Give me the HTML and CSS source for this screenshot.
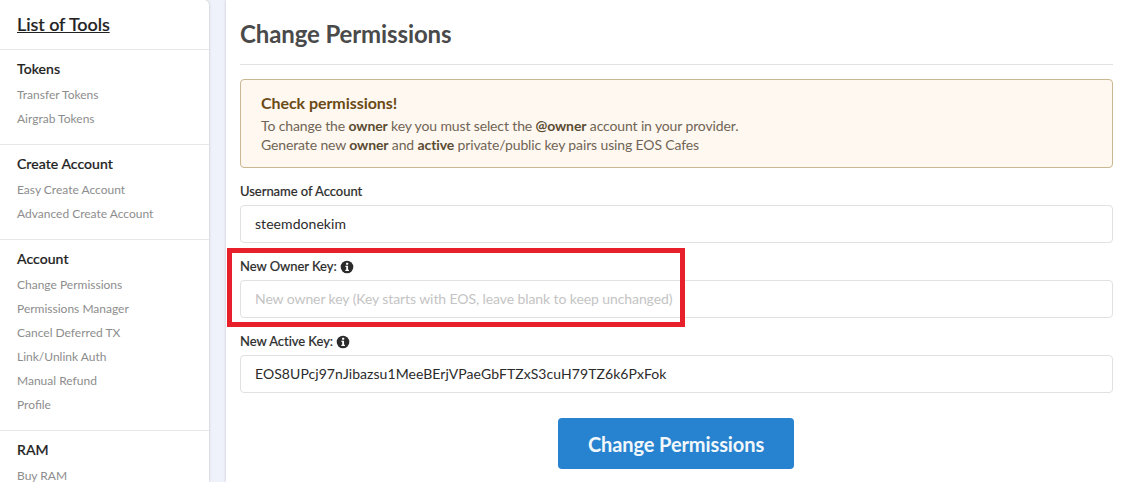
FILE: index.html
```html
<!DOCTYPE html>
<html lang="en">
<head>
<meta charset="utf-8">
<title>Change Permissions</title>
<link rel="stylesheet" href="styles.css">
</head>
<body>
<div class="page">
  <aside class="sidebar">
    <div class="side-title"><a href="#">List of Tools</a></div>
    <section class="side-group">
      <h4>Tokens</h4>
      <a href="#">Transfer Tokens</a>
      <a href="#">Airgrab Tokens</a>
    </section>
    <section class="side-group">
      <h4>Create Account</h4>
      <a href="#">Easy Create Account</a>
      <a href="#">Advanced Create Account</a>
    </section>
    <section class="side-group">
      <h4>Account</h4>
      <a href="#">Change Permissions</a>
      <a href="#">Permissions Manager</a>
      <a href="#">Cancel Deferred TX</a>
      <a href="#">Link/Unlink Auth</a>
      <a href="#">Manual Refund</a>
      <a href="#">Profile</a>
    </section>
    <section class="side-group">
      <h4>RAM</h4>
      <a href="#">Buy RAM</a>
    </section>
  </aside>
  <main class="main">
    <h1>Change Permissions</h1>
    <div class="notice">
      <h3>Check permissions!</h3>
      <p>To change the <b>owner</b> key you must select the <b>@owner</b> account in your provider.</p>
      <p>Generate new <b>owner</b> and <b>active</b> private/public key pairs using EOS Cafes</p>
    </div>
    <div class="field">
      <label for="user">Username of Account</label>
      <input id="user" type="text" value="steemdonekim">
    </div>
    <div class="field">
      <label for="owner">New Owner Key:
        <svg class="info" viewBox="0 0 16 16" aria-hidden="true"><circle cx="8" cy="8" r="7.2" fill="#2b2b2b"/><rect x="6.9" y="3.2" width="2.4" height="2.3" rx=".4" fill="#fff"/><path d="M6.2 6.7h3v4.4h1v1.4H6.1v-1.4h1V8.1h-.9z" fill="#fff"/></svg>
      </label>
      <input id="owner" type="text" placeholder="New owner key (Key starts with EOS, leave blank to keep unchanged)">
    </div>
    <div class="field">
      <label for="active">New Active Key:
        <svg class="info" viewBox="0 0 16 16" aria-hidden="true"><circle cx="8" cy="8" r="7.2" fill="#2b2b2b"/><rect x="6.9" y="3.2" width="2.4" height="2.3" rx=".4" fill="#fff"/><path d="M6.2 6.7h3v4.4h1v1.4H6.1v-1.4h1V8.1h-.9z" fill="#fff"/></svg>
      </label>
      <input id="active" type="text" value="EOS8UPcj97nJibazsu1MeeBErjVPaeGbFTZxS3cuH79TZ6k6PxFok">
    </div>
    <div class="actions"><button type="button">Change Permissions</button></div>
    <div class="highlight"></div>
  </main>
</div>
</body>
</html>
```
FILE: styles.css
```css
* { box-sizing: border-box; }
html, body { margin: 0; height: 100%; overflow: hidden; }
body { background: #eff1fb; font-family: Lato, "Liberation Sans", sans-serif; color: #222; }
.page { display: flex; gap: 17px; width: 1126px; height: 482px; overflow: hidden; }
.sidebar {
  flex: 0 0 209px; height: 482px; background: #fff; overflow: hidden;
  border-radius: 0 5px 0 0; box-shadow: 0 0 3px rgba(0,0,0,.22);
}
.side-title { height: 50px; padding: 13px 17px 0; font-size: 18px; line-height: 22px; font-weight: 500; letter-spacing: -.08px; border-bottom: 1px solid #e8e8e8; -webkit-text-stroke: .2px #222; }
.side-title a { color: #222; text-decoration: underline; }
.side-group { height: 95px; padding: 9px 17px 0; border-bottom: 1px solid #e8e8e8; }
.side-group:nth-of-type(3) { height: 191px; }
.side-group:last-child { border: 0; }
.side-group h4 { margin: 0 0 5px; font-size: 14px; line-height: 19px; font-weight: 500; letter-spacing: .06px; color: #222; -webkit-text-stroke: .2px #222; }
.side-group a { display: block; height: 24px; font-size: 12px; line-height: 24px; color: #8d8d8d; text-decoration: none; }
.main { position: relative; flex: 1; height: 482px; padding: 0 13px 0 14px; background: #fff; box-shadow: 0 0 3px rgba(0,0,0,.18); overflow: hidden; }
h1 { margin: 0 0 14px; height: 65px; padding-top: 18px; font-size: 24px; line-height: 32px; font-weight: 700; letter-spacing: -.12px; color: #4a4a4a; border-bottom: 1px solid #e2e2e2; }
.notice { height: 89px; padding: 13px 20px; background: #fff8f0; border: 1px solid #c9b892; border-radius: 4px; margin-bottom: 14px; }
.notice h3 { margin: 0 0 3px; font-size: 16px; line-height: 20px; font-weight: 700; letter-spacing: -.06px; color: #6b4a16; }
.notice p { margin: 0; font-size: 14px; line-height: 19px; letter-spacing: -.13px; color: #6f6556; }
.notice b { font-weight: 700; color: #5a4c33; }
.field { margin-bottom: 14px; }
.field label { display: flex; align-items: center; gap: 3px; height: 19px; margin-bottom: 4px; font-size: 13px; line-height: 19px; font-weight: 500; letter-spacing: -.05px; color: #2e2e2e; -webkit-text-stroke: .15px #2e2e2e; }
.info { width: 14px; height: 14px; }
.field input { display: block; width: 100%; height: 38px; padding: 0 14px 2px; background: #fff; border: 1px solid #e1e1e1; border-radius: 4px; font: 14px Lato, "Liberation Sans", sans-serif; color: #2b2b2b; letter-spacing: .06px; outline: 0; }
.field input::placeholder { color: #c4c4c4; opacity: 1; letter-spacing: -.09px; }
.actions { display: flex; justify-content: center; padding-top: 11px; margin-left: -1px; }
.actions button { width: 236px; height: 51px; border: 0; border-radius: 4px; background: #2783cf; color: #f2f7fb; font: 700 20px/51px Lato, "Liberation Sans", sans-serif; letter-spacing: -.1px; }
.highlight { position: absolute; left: 1px; top: 248px; width: 458px; height: 79px; border: 5px solid #e8202c; pointer-events: none; }
```
